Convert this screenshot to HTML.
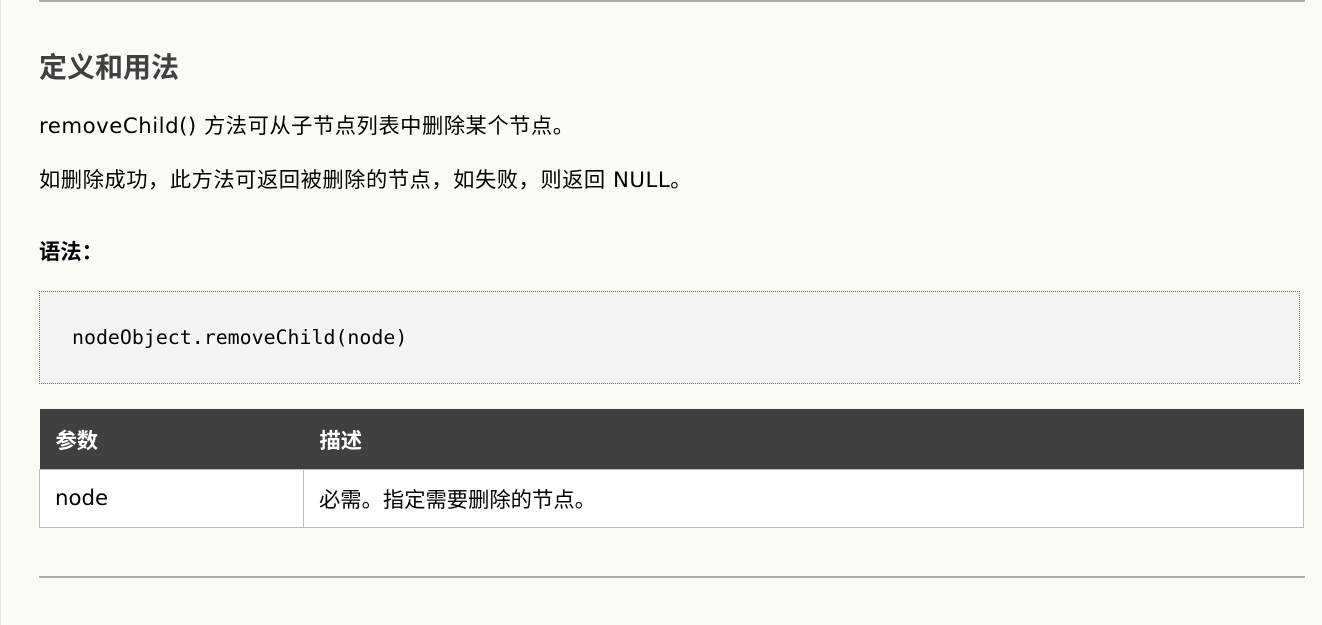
<!DOCTYPE html>
<html><head><meta charset="utf-8"><style>
body{margin:0;width:1322px;height:625px;background:#fbfbf6;font-family:"DejaVu Sans","Noto Sans CJK SC",sans-serif;color:#000;position:relative;overflow:hidden}
.lb{position:absolute;left:0;top:0;width:1px;height:625px;background:#e4e4e0}
.hr{position:absolute;left:39px;width:1266px;height:2px;background:#aaa}
.t{position:absolute;left:39px;white-space:nowrap;line-height:1}
h2{position:absolute;left:39px;top:54px;margin:0;font-size:28px;line-height:28px;color:#404040;font-weight:bold}
.p{font-size:21.3px;letter-spacing:0.5px}
.code{position:absolute;left:39px;top:291px;width:1261px;height:93px;box-sizing:border-box;border:1px dotted #6b7040;background:#f4f4f4;font-family:"DejaVu Sans Mono","Liberation Mono",monospace;font-size:19.9px;padding-left:32px;line-height:92px}
table{position:absolute;left:39px;top:409px;width:1265px;border-collapse:collapse;font-size:21.3px}
th{background:#404040;color:#fff;text-align:left;height:60px;padding:0 0 0 16px;font-weight:bold}
td{background:#fff;height:57px;padding:0 0 0 15px;border:1px solid #bbb}
</style></head><body>
<div class="lb"></div>
<div class="hr" style="top:0"></div>
<h2>定义和用法</h2>
<div class="t p" style="top:116px">removeChild() 方法可从子节点列表中删除某个节点。</div>
<div class="t p" style="top:170px">如删除成功，此方法可返回被删除的节点，如失败，则返回 NULL。</div>
<div class="t" style="top:242px;font-size:21.3px;font-weight:bold">语法：</div>
<div class="code">nodeObject.removeChild(node)</div>
<table><tr><th style="width:248px">参数</th><th>描述</th></tr>
<tr><td>node</td><td>必需。指定需要删除的节点。</td></tr></table>
<div class="hr" style="top:576px"></div>
</body></html>
